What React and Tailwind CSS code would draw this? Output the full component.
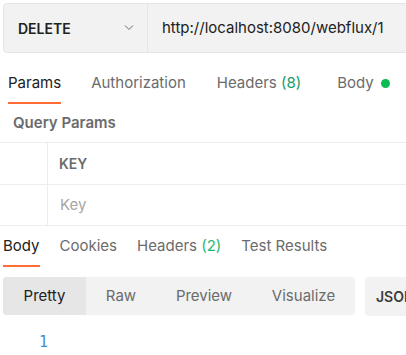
export default function App() {
  const font = { fontFamily: 'Inter, "Noto Sans", sans-serif' };
  return (
    <div className="w-[406px] h-[355px] overflow-hidden bg-white text-[15px] text-[#212121]" style={font}>
      {/* URL bar */}
      <div className="pt-[3px] pl-[3px]">
        <div className="flex h-[50px] w-[420px] rounded-[4px] border border-[#e6e6e6] bg-[#f2f2f2]">
          <div className="flex w-[144px] shrink-0 items-center justify-between border-r border-[#e6e6e6] pl-[14px] pr-[13px]">
            <span className="text-[14px] font-semibold text-[#212121]">DELETE</span>
            <svg width="10" height="6" viewBox="0 0 10 6" fill="none" stroke="#6b6b6b" strokeWidth="1">
              <path d="M1 0.5 L5 4.5 L9 0.5" />
            </svg>
          </div>
          <div className="flex items-center pl-[14px] text-[#212121]">http://localhost:8080/webflux/1</div>
        </div>
      </div>

      {/* Request tabs */}
      <div className="mt-[20px] flex pl-[8px] text-[#6b6b6b]">
        <div className="flex flex-col">
          <span className="leading-[20px] text-[#212121]">Params</span>
          <span className="mt-[9px] h-[2px] bg-[#ff6c37]"></span>
        </div>
        <span className="ml-[30px] leading-[20px]">Authorization</span>
        <span className="ml-[31px] leading-[20px]">
          Headers <span className="text-[#179a68]">(8)</span>
        </span>
        <span className="ml-[36px] leading-[20px]">
          Body
          <span className="ml-[7px] inline-block h-[9px] w-[9px] rounded-full bg-[#0cbb52]"></span>
        </span>
      </div>

      {/* Query params */}
      <div className="mt-[9px] pl-[13px] font-semibold leading-[20px] text-[#6b6b6b]">Query Params</div>
      <div className="mt-[9px] border-t border-[#ededed]">
        <div className="flex h-[42px] border-b border-[#ededed]">
          <div className="w-[48px] border-r border-[#ededed]"></div>
          <div className="flex items-center pl-[11px] text-[14px] font-semibold text-[#6b6b6b]">KEY</div>
        </div>
        <div className="flex h-[41px] border-b border-[#ededed]">
          <div className="w-[48px] border-r border-[#ededed]"></div>
          <div className="flex items-center pl-[12px] text-[#a6a6a6]">Key</div>
        </div>
      </div>

      {/* Response tabs */}
      <div className="mt-[10px] flex pl-[3px] text-[#6b6b6b]">
        <div className="flex flex-col">
          <span className="leading-[20px] text-[#212121]">Body</span>
          <span className="mt-[9px] h-[2px] bg-[#ff6c37]"></span>
        </div>
        <span className="ml-[20px] leading-[20px]">Cookies</span>
        <span className="ml-[20px] leading-[20px]">
          Headers <span className="text-[#2bb673]">(2)</span>
        </span>
        <span className="ml-[20px] leading-[20px]">Test Results</span>
      </div>

      {/* Format controls */}
      <div className="mt-[10px] flex pl-[3px]">
        <div className="flex h-[38px] w-[352px] shrink-0 overflow-hidden rounded-[4px] bg-[#f2f2f2] text-[#6b6b6b]">
          <div className="flex w-[83px] items-center justify-center bg-[#e6e6e6] text-[#212121]">Pretty</div>
          <div className="flex w-[70px] items-center justify-center">Raw</div>
          <div className="flex w-[96px] items-center justify-center">Preview</div>
          <div className="flex w-[103px] items-center justify-center">Visualize</div>
        </div>
        <div className="ml-[10px] flex h-[39px] w-[70px] shrink-0 items-center rounded-[4px] bg-[#f2f2f2] pl-[11px] text-[14px] font-semibold text-[#3c3c3c]">
          JSON
        </div>
      </div>

      {/* Code */}
      <div className="mt-[16px] pl-[39px] text-[15px] leading-[20px] text-[#3f8fcf]" style={{ fontFamily: '"DejaVu Sans Mono", monospace' }}>
        1
      </div>
    </div>
  );
}
